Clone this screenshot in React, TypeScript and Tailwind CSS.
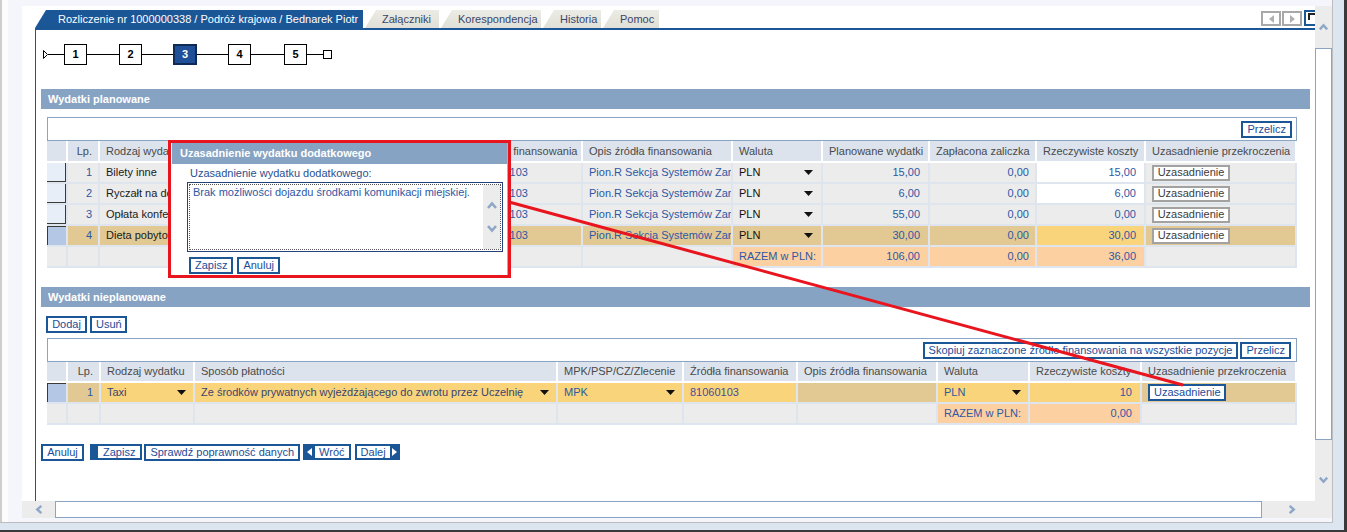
import React from "react";

type PRow = {
  lp: number;
  rodzaj: string;
  plan: string;
  rzecz: string;
  kind: "edit" | "ro" | "sel";
};

const planned: PRow[] = [
  { lp: 1, rodzaj: "Bilety inne", plan: "15,00", rzecz: "15,00", kind: "edit" },
  { lp: 2, rodzaj: "Ryczałt na dojazdy", plan: "6,00", rzecz: "6,00", kind: "edit" },
  { lp: 3, rodzaj: "Opłata konferencyjna", plan: "55,00", rzecz: "0,00", kind: "ro" },
  { lp: 4, rodzaj: "Dieta pobytowa", plan: "30,00", rzecz: "30,00", kind: "sel" },
];

const cell =
  "h-[21px] border-r-2 border-b-2 border-[#dfe5ef] flex items-center overflow-hidden whitespace-nowrap";
const head =
  "border-r-2 border-b-2 border-white bg-[#dce3ed] text-[#4a4a4a] flex items-center px-[6px] overflow-hidden whitespace-nowrap";

function Caret() {
  return (
    <svg width="9" height="5" viewBox="0 0 9 5" className="shrink-0">
      <path d="M0 0h9L4.5 5z" fill="#111" />
    </svg>
  );
}

function Chevron({ dir, size = 11 }: { dir: "up" | "down" | "left" | "right"; size?: number }) {
  const d = {
    up: "M2 8L6 3.5L10 8",
    down: "M2 4L6 8.5L10 4",
    left: "M8 2L3.5 6L8 10",
    right: "M4 2L8.5 6L4 10",
  }[dir];
  return (
    <svg width={size} height={size} viewBox="0 0 12 12">
      <path d={d} fill="none" stroke="#8ea7c6" strokeWidth="2.6" />
    </svg>
  );
}

function SelCell({ active, empty }: { active?: boolean; empty?: boolean }) {
  if (empty) return <div className={cell + " bg-[#ececec]"} />;
  return (
    <div className={cell + " bg-[#ececec] items-stretch"}>
      {active ? (
        <div className="flex-1 bg-[#b4c8e6] border-t border-l border-[#3a3a3a]" />
      ) : (
        <div className="flex-1 bg-[#e8eef8] border-r border-b border-[#3a3a3a]" />
      )}
    </div>
  );
}

function BlueBtn({ children, cls = "" }: { children: React.ReactNode; cls?: string }) {
  return (
    <button
      className={
        "h-[17px] bg-white border-2 border-[#1b5697] text-[#1c4c98] text-[11px] leading-none px-[4px] whitespace-nowrap " +
        cls
      }
    >
      {children}
    </button>
  );
}

function GrayBtn() {
  return (
    <div className="h-[16px] w-[78px] bg-white border-2 border-[#a2a2a2] text-[#3c3c3c] flex items-center justify-center leading-none">
      Uzasadnienie
    </div>
  );
}

function StepBox({ n, active }: { n: number; active?: boolean }) {
  return active ? (
    <div className="w-[24px] h-[21px] border-2 border-[#0f2a55] bg-[#1f4f96] text-white font-bold flex items-center justify-center">
      {n}
    </div>
  ) : (
    <div className="w-[23px] h-[21px] border border-black bg-white font-bold flex items-center justify-center">
      {n}
    </div>
  );
}

function Steps() {
  return (
    <div className="flex items-center mt-[14px] ml-[2px] h-[21px]">
      <svg width="5" height="9" viewBox="0 0 5 9">
        <path d="M0.5 0.5L4.5 4.5L0.5 8.5Z" fill="white" stroke="black" />
      </svg>
      <div className="w-[16px] h-px bg-black" />
      <StepBox n={1} />
      <div className="w-[32px] h-px bg-black" />
      <StepBox n={2} />
      <div className="w-[31px] h-px bg-black" />
      <StepBox n={3} active />
      <div className="w-[31px] h-px bg-black" />
      <StepBox n={4} />
      <div className="w-[33px] h-px bg-black" />
      <StepBox n={5} />
      <div className="w-[16px] h-px bg-black" />
      <div className="w-[9px] h-[9px] border border-black bg-white" />
    </div>
  );
}

function SectionBar({ title }: { title: string }) {
  return (
    <div className="h-[20px] w-[1269px] bg-[#87a3c3] text-white font-bold flex items-center pl-[7px]">
      {title}
    </div>
  );
}

function PlannedTable() {
  return (
    <div className="ml-[6px] mt-[8px] w-[1250px]">
      <div className="h-[24px] border border-[#8ca4c4] flex items-center justify-end pr-[4px]">
        <BlueBtn>Przelicz</BlueBtn>
      </div>
      <div className="grid grid-cols-[21px_32px_180px_193px_110px_150px_90px_107px_107px_109px_151px]">
        <div className={head + " h-[22px]"} />
        <div className={head + " h-[22px] justify-end"}>Lp.</div>
        <div className={head + " h-[22px]"}>Rodzaj wydatku</div>
        <div className={head + " h-[22px]"}>MPK/PSP/CZ/Zlecenie</div>
        <div className={head + " h-[22px]"}>Źródła finansowania</div>
        <div className={head + " h-[22px]"}>Opis źródła finansowania</div>
        <div className={head + " h-[22px]"}>Waluta</div>
        <div className={head + " h-[22px]"}>Planowane wydatki</div>
        <div className={head + " h-[22px]"}>Zapłacona zaliczka</div>
        <div className={head + " h-[22px]"}>Rzeczywiste koszty</div>
        <div className={head + " h-[22px]"}>Uzasadnienie przekroczenia</div>

        {planned.map((r) => {
          const sel = r.kind === "sel";
          const bg = sel ? " bg-[#e2c994]" : " bg-[#ececec]";
          const rz =
            r.kind === "edit" ? " bg-white" : r.kind === "sel" ? " bg-[#f9d47a]" : " bg-[#ececec]";
          return (
            <React.Fragment key={r.lp}>
              <SelCell active={sel} />
              <div className={cell + bg + " justify-end pr-[6px] text-[#2d58a3]"}>{r.lp}</div>
              <div className={cell + bg + " pl-[6px] text-[#1a1a1a]"}>{r.rodzaj}</div>
              <div className={cell + bg + " pl-[6px] text-[#2d58a3]"}>MPK</div>
              <div className={cell + bg + " pl-[6px] text-[#2d58a3]"}>81060103</div>
              <div className={cell + bg + " pl-[6px] text-[#2d58a3]"}>Pion.R Sekcja Systemów Zar</div>
              <div className={cell + bg + " pl-[6px] pr-[8px] justify-between text-[#111]"}>
                PLN
                <Caret />
              </div>
              <div className={cell + bg + " justify-end pr-[8px] text-[#2d58a3]"}>{r.plan}</div>
              <div className={cell + bg + " justify-end pr-[6px] text-[#2d58a3]"}>0,00</div>
              <div className={cell + rz + " justify-end pr-[8px] text-[#2d58a3]"}>{r.rzecz}</div>
              <div className={cell + bg + " pl-[6px]"}>
                <GrayBtn />
              </div>
            </React.Fragment>
          );
        })}

        <SelCell empty />
        <div className={cell + " bg-[#ececec]"} />
        <div className={cell + " bg-[#ececec]"} />
        <div className={cell + " bg-[#ececec]"} />
        <div className={cell + " bg-[#ececec]"} />
        <div className={cell + " bg-[#ececec]"} />
        <div className={cell + " bg-[#fdd0a2] pl-[6px] text-[#2d58a3]"}>RAZEM w PLN:</div>
        <div className={cell + " bg-[#fdd0a2] justify-end pr-[8px] text-[#2d58a3]"}>106,00</div>
        <div className={cell + " bg-[#fdd0a2] justify-end pr-[6px] text-[#2d58a3]"}>0,00</div>
        <div className={cell + " bg-[#fdd0a2] justify-end pr-[8px] text-[#2d58a3]"}>36,00</div>
        <div className={cell + " bg-[#ececec]"} />
      </div>
    </div>
  );
}

function UnplannedTable() {
  return (
    <div className="ml-[6px] mt-[5px] w-[1250px]">
      <div className="h-[24px] border border-[#8ca4c4] flex items-center justify-end gap-[2px] pr-[5px]">
        <BlueBtn>Skopiuj zaznaczone źródło finansowania na wszystkie pozycje</BlueBtn>
        <BlueBtn>Przelicz</BlueBtn>
      </div>
      <div className="grid grid-cols-[21px_33px_94px_363px_126px_114px_140px_92px_112px_155px]">
        <div className={head + " h-[21px]"} />
        <div className={head + " h-[21px] justify-end"}>Lp.</div>
        <div className={head + " h-[21px]"}>Rodzaj wydatku</div>
        <div className={head + " h-[21px]"}>Sposób płatności</div>
        <div className={head + " h-[21px]"}>MPK/PSP/CZ/Zlecenie</div>
        <div className={head + " h-[21px]"}>Źródła finansowania</div>
        <div className={head + " h-[21px]"}>Opis źródła finansowania</div>
        <div className={head + " h-[21px]"}>Waluta</div>
        <div className={head + " h-[21px]"}>Rzeczywiste koszty</div>
        <div className={head + " h-[21px]"}>Uzasadnienie przekroczenia</div>

        <SelCell active />
        <div className={cell + " bg-[#e2c994] justify-end pr-[6px] text-[#2d58a3]"}>1</div>
        <div className={cell + " bg-[#f9d47a] pl-[6px] pr-[7px] justify-between text-[#3a4470]"}>
          Taxi
          <Caret />
        </div>
        <div className={cell + " bg-[#f9d47a] pl-[6px] pr-[7px] justify-between text-[#3a4470]"}>
          Ze środków prywatnych wyjeżdżającego do zwrotu przez Uczelnię
          <Caret />
        </div>
        <div className={cell + " bg-[#f9d47a] pl-[6px] pr-[7px] justify-between text-[#2d58a3]"}>
          MPK
          <Caret />
        </div>
        <div className={cell + " bg-[#f9d47a] pl-[6px] text-[#4a4a9a]"}>81060103</div>
        <div className={cell + " bg-[#e2c994]"} />
        <div className={cell + " bg-[#f9d47a] pl-[6px] pr-[7px] justify-between text-[#2d58a3]"}>
          PLN
          <Caret />
        </div>
        <div className={cell + " bg-[#f9d47a] justify-end pr-[8px] text-[#2d58a3]"}>10</div>
        <div className={cell + " bg-[#e2c994] pl-[6px]"}>
          <BlueBtn cls="h-[16px] w-[78px]">Uzasadnienie</BlueBtn>
        </div>

        <SelCell empty />
        <div className={cell + " bg-[#ececec]"} />
        <div className={cell + " bg-[#ececec]"} />
        <div className={cell + " bg-[#ececec]"} />
        <div className={cell + " bg-[#ececec]"} />
        <div className={cell + " bg-[#ececec]"} />
        <div className={cell + " bg-[#ececec]"} />
        <div className={cell + " bg-[#fdd0a2] pl-[6px] text-[#2d58a3]"}>RAZEM w PLN:</div>
        <div className={cell + " bg-[#fdd0a2] justify-end pr-[8px] text-[#2d58a3]"}>0,00</div>
        <div className={cell + " bg-[#ececec]"} />
      </div>
    </div>
  );
}

function Popup() {
  return (
    <div className="absolute left-[146px] top-[134px] w-[343px] h-[138px] border-[3px] border-[#e8141e] bg-white pl-px">
      <div className="h-full flex flex-col border-r border-[#9fb3cc]">
        <div className="h-[21px] bg-[#87a3c3] text-white font-bold text-[11px] flex items-center pl-[8px]">
          Uzasadnienie wydatku dodatkowego
        </div>
        <div className="pl-[18px] pt-[3px] text-[#2a4f8f] leading-[13px]">Uzasadnienie wydatku dodatkowego:</div>
        <div className="ml-[15px] mt-[2px] w-[316px] h-[70px] border border-[#23427a] p-px">
          <div className="h-full border border-dotted border-[#555] flex">
            <div className="flex-1 pl-[3px] pt-[1px] text-[#2d58a3] leading-[13px]">
              Brak możliwości dojazdu środkami komunikacji miejskiej.
            </div>
            <div className="w-[17px] bg-[#ececec] flex flex-col items-center justify-center gap-[10px]">
              <Chevron dir="up" size={12} />
              <Chevron dir="down" size={12} />
            </div>
          </div>
        </div>
        <div className="flex gap-[4px] ml-[17px] mt-[5px]">
          <BlueBtn cls="h-[16px]">Zapisz</BlueBtn>
          <BlueBtn cls="h-[16px]">Anuluj</BlueBtn>
        </div>
      </div>
    </div>
  );
}

function Tabs() {
  const others = [
    { t: "Załączniki", w: "w-[74px]" },
    { t: "Korespondencja", w: "w-[100px]" },
    { t: "Historia", w: "w-[58px]" },
    { t: "Pomoc", w: "w-[56px]" },
  ];
  return (
    <div className="flex items-end h-[24px] border-b-2 border-[#1b5697]">
      <div className="h-[18px] w-[328px] bg-[#1b5697] text-white flex items-center pl-[23px] whitespace-nowrap [clip-path:polygon(11px_0,100%_0,100%_100%,0_100%)]">
        Rozliczenie nr 1000000338 / Podróż krajowa / Bednarek Piotr
      </div>
      {others.map((o) => (
        <div
          key={o.t}
          className={
            "h-[18px] ml-[2px] bg-gradient-to-b from-[#ececE6] to-[#e0e0d8] text-[#3a4668] flex items-center pl-[17px] whitespace-nowrap [clip-path:polygon(11px_0,100%_0,100%_100%,0_100%)] " +
            o.w
          }
        >
          {o.t}
        </div>
      ))}
      <div className="ml-auto flex items-end gap-[1px] mb-[2px]">
        <div className="w-[20px] h-[15px] border-2 border-[#a8a8a8] bg-white flex items-center justify-center">
          <svg width="5" height="8" viewBox="0 0 5 8">
            <path d="M5 0v8L0 4z" fill="#b0b0b0" />
          </svg>
        </div>
        <div className="w-[20px] h-[15px] border-2 border-[#a8a8a8] bg-white flex items-center justify-center">
          <svg width="5" height="8" viewBox="0 0 5 8">
            <path d="M0 0v8L5 4z" fill="#b0b0b0" />
          </svg>
        </div>
        <div className="ml-[1px] w-[11px] h-[16px] border-2 border-r-0 border-[#1b5697] bg-white pt-[1px] pl-[2px]">
          <div className="w-[8px] h-[7px] border-t-2 border-l-2 border-[#222]" />
        </div>
      </div>
    </div>
  );
}

function BottomButtons() {
  return (
    <div className="flex items-center mt-[19px] h-[16px]">
      <BlueBtn cls="h-[16px] w-[43px]">Anuluj</BlueBtn>
      <div className="ml-[6px] h-[16px] bg-[#1b5697] pl-[8px] pr-[2px] py-[2px] flex">
        <div className="bg-white text-[#1c4c98] px-[5px] flex items-center leading-none">Zapisz</div>
      </div>
      <BlueBtn cls="h-[16px] ml-[2px] px-[3px]">Sprawdź poprawność danych</BlueBtn>
      <div className="ml-[3px] h-[16px] bg-[#1b5697] pl-[4px] pr-[2px] py-[2px] flex items-center gap-[3px]">
        <svg width="5" height="8" viewBox="0 0 5 8">
          <path d="M5 0v8L0 4z" fill="white" />
        </svg>
        <div className="h-full bg-white text-[#1c4c98] px-[4px] flex items-center leading-none">Wróć</div>
      </div>
      <div className="ml-[4px] h-[16px] bg-[#1b5697] pl-[2px] pr-[3px] py-[2px] flex items-center gap-[2px]">
        <div className="h-full bg-white text-[#1c4c98] px-[4px] flex items-center leading-none">Dalej</div>
        <svg width="5" height="8" viewBox="0 0 5 8">
          <path d="M0 0v8L5 4z" fill="white" />
        </svg>
      </div>
    </div>
  );
}

function Main() {
  return (
    <div className="relative w-[1293px] bg-white overflow-hidden pl-[13px] flex flex-col">
      <Tabs />
      <div className="flex-1 border-l border-[#1b5697] pl-[5px]">
        <Steps />
        <div className="mt-[24px]">
          <SectionBar title="Wydatki planowane" />
        </div>
        <PlannedTable />
        <div className="mt-[19px]">
          <SectionBar title="Wydatki nieplanowane" />
        </div>
        <div className="flex gap-[3px] mt-[9px] ml-[5px]">
          <BlueBtn cls="w-[41px]">Dodaj</BlueBtn>
          <BlueBtn cls="w-[37px]">Usuń</BlueBtn>
        </div>
        <UnplannedTable />
        <BottomButtons />
      </div>
      <Popup />
      <svg className="absolute inset-0 pointer-events-none" width="1293" height="495">
        <line x1="487" y1="196" x2="1161" y2="379" stroke="#e8141e" strokeWidth="3" />
      </svg>
    </div>
  );
}

function VScroll() {
  return (
    <div className="w-[17px] bg-[#ececec] flex flex-col">
      <div className="h-[42px] flex items-center justify-center">
        <Chevron dir="up" />
      </div>
      <div className="h-[392px] bg-white border border-[#8ca4c4]" />
      <div className="flex-1 flex items-end justify-center pb-[16px]">
        <Chevron dir="down" />
      </div>
    </div>
  );
}

function HScroll() {
  return (
    <div className="h-[17px] flex bg-[#ececec]">
      <div className="w-[33px] flex items-center justify-end pr-[10px]">
        <Chevron dir="left" />
      </div>
      <div className="w-[1207px] bg-white border border-[#8ca4c4]" />
      <div className="flex-1 flex items-center pl-[24px]">
        <Chevron dir="right" />
      </div>
    </div>
  );
}

export default function App() {
  return (
    <div className="w-[1347px] h-[532px] overflow-hidden bg-[#dce6f0] border-r-[3px] border-b-2 border-[#3a3a3a] font-['Liberation_Sans',Arial,sans-serif] text-[11px]">
      <div className="w-[1333px] h-[523px] flex border-r border-b border-[#bdbdbd] bg-[#f5f5fc]">
        <div className="w-[2px] bg-[#cdcdcd]" />
        <div className="w-[6px] bg-[#fcfcfc]" />
        <div className="w-[14px]" />
        <div className="w-[1310px] pt-[6px] flex flex-col">
          <div className="flex h-[495px]">
            <Main />
            <VScroll />
          </div>
          <HScroll />
        </div>
      </div>
    </div>
  );
}
